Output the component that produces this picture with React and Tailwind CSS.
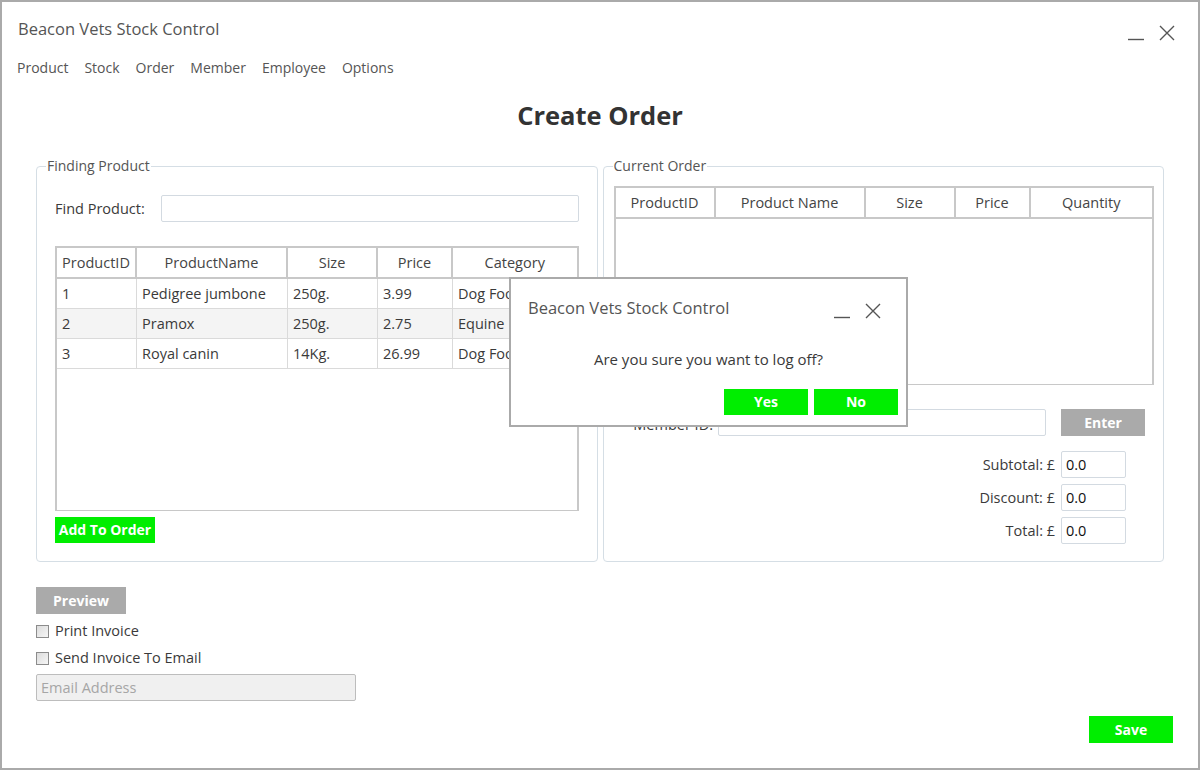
import React from "react";

const FONT = { fontFamily: '"Open Sans", "Noto Sans", sans-serif' };

const leftCols = ["ProductID", "ProductName", "Size", "Price", "Category"];
const rightCols = ["ProductID", "Product Name", "Size", "Price", "Quantity"];

const products = [
  { id: "1", name: "Pedigree jumbone", size: "250g.", price: "3.99", category: "Dog Food" },
  { id: "2", name: "Pramox", size: "250g.", price: "2.75", category: "Equine Health" },
  { id: "3", name: "Royal canin", size: "14Kg.", price: "26.99", category: "Dog Food" },
];

// window min / close glyphs
const WinControls = ({ className = "" }) => (
  <div className={`flex items-start gap-[15px] ${className}`}>
    <svg width="16" height="16" viewBox="0 0 16 16">
      <line x1="0" y1="14.5" x2="16" y2="14.5" stroke="#555" strokeWidth="1.4" />
    </svg>
    <svg width="16" height="16" viewBox="0 0 16 16">
      <path d="M1 1 L15 15 M15 1 L1 15" stroke="#555" strokeWidth="1.4" fill="none" />
    </svg>
  </div>
);

const GreenButton = ({ children, className = "" }) => (
  <button className={`h-[26px] bg-[#00ee00] text-white font-bold text-[14px] leading-none ${className}`}>
    {children}
  </button>
);

const GrayButton = ({ children, className = "" }) => (
  <button className={`h-[27px] bg-[#aaaaaa] text-white font-bold text-[14px] leading-none ${className}`}>
    {children}
  </button>
);

const TextBox = ({ className = "", value }) => (
  <div className={`h-[27px] border border-[#d3dae1] rounded-[2px] bg-white flex items-center px-[4px] text-[14.5px] text-[#111] ${className}`}>
    {value}
  </div>
);

const ProductTable = ({ cols, grid, rows, height }) => (
  <div className={`border-x-2 border-t-2 border-b border-[#c8c8c8] bg-white ${height}`}>
    <div className={`grid ${grid} border-b-2 border-[#c8c8c8] h-[31px]`}>
      {cols.map((c, i) => (
        <div
          key={c}
          className={`flex items-center justify-center text-[14.5px] text-[#444] ${i < cols.length - 1 ? "border-r-2 border-[#c8c8c8]" : ""}`}
        >
          {c}
        </div>
      ))}
    </div>
    {rows.map((r, ri) => (
      <div
        key={r.id}
        className={`grid ${grid} h-[30px] border-b border-[#dadada] ${ri === 1 ? "bg-[#f4f4f4]" : ""}`}
      >
        {[r.id, r.name, r.size, r.price, r.category].map((v, i) => (
          <div
            key={i}
            className={`flex items-center px-[5px] text-[14.5px] text-[#3a3a3a] whitespace-nowrap overflow-hidden ${i < 4 ? "border-r border-[#dadada]" : ""}`}
          >
            {v}
          </div>
        ))}
      </div>
    ))}
  </div>
);

const Checkbox = ({ label }) => (
  <label className="flex items-center gap-[6px] h-[20px] text-[14.5px] text-[#3a3a3a]">
    <span className="w-[13px] h-[13px] border border-[#8c8c8c] bg-gradient-to-br from-[#dcdcdc] to-[#f6f6f6]" />
    {label}
  </label>
);

export default function App() {
  return (
    <div style={FONT} className="w-[1200px] h-[770px] border-2 border-[#aaaaaa] bg-white relative overflow-hidden">
      {/* title bar */}
      <div className="flex justify-between pl-[16px] pr-[23px] pt-[15px]">
        <div className="text-[16.5px] leading-[24px] text-[#555]">Beacon Vets Stock Control</div>
        <WinControls className="mt-[8px]" />
      </div>

      {/* menu */}
      <nav className="flex gap-[16px] pl-[15px] mt-[17px] text-[14px] leading-[20px] text-[#555]">
        {["Product", "Stock", "Order", "Member", "Employee", "Options"].map((m) => (
          <span key={m}>{m}</span>
        ))}
      </nav>

      <h1 className="text-center text-[25.5px] leading-[34px] font-bold text-[#333] mt-[20px]">Create Order</h1>

      {/* two group boxes */}
      <div className="flex gap-[5px] px-[34px] mt-[24px] items-stretch">
        <fieldset className="w-[562px] border border-[#d5dee5] rounded-[4px] px-[18px] pb-[18px] m-0 min-w-0">
          <legend className="ml-[-9px] px-[1px] text-[14px] leading-[20px] text-[#555]">Finding Product</legend>
          <div className="flex items-center mt-[19px]">
            <span className="w-[106px] text-[14.5px] text-[#3a3a3a]">Find Product:</span>
            <TextBox className="flex-1 h-[26px]" />
          </div>
          <div className="mt-[24px]">
            <ProductTable
              cols={leftCols}
              grid="grid-cols-[80px_151px_90px_75px_1fr]"
              rows={products}
              height="h-[265px]"
            />
          </div>
          <GreenButton className="w-[100px] mt-[6px]">Add To Order</GreenButton>
        </fieldset>

        <fieldset className="w-[562px] border border-[#d5dee5] rounded-[4px] pl-[10px] pr-[9px] pb-[12px] m-0 min-w-0">
          <legend className="ml-[-1px] px-[1px] text-[14px] leading-[20px] text-[#555]">Current Order</legend>
          <div className="mt-[10px]">
            <ProductTable
              cols={rightCols}
              grid="grid-cols-[100px_150px_90px_75px_1fr]"
              rows={[]}
              height="h-[199px]"
            />
          </div>
          <div className="flex items-center justify-end pr-[9px] mt-[24px]">
            <span className="text-[14.5px] text-[#3a3a3a] mr-[5px] mt-[5px]">Member ID:</span>
            <TextBox className="w-[328px]" />
            <GrayButton className="w-[84px] ml-[15px]">Enter</GrayButton>
          </div>
          <div className="flex flex-col items-end gap-[6px] pr-[28px] mt-[15px]">
            {["Subtotal: £", "Discount: £", "Total: £"].map((l) => (
              <div key={l} className="flex items-center">
                <span className="text-[14.5px] text-[#3a3a3a] mr-[6px]">{l}</span>
                <TextBox className="w-[65px]" value="0.0" />
              </div>
            ))}
          </div>
        </fieldset>
      </div>

      {/* bottom area */}
      <div className="flex flex-col items-start px-[34px] mt-[25px]">
        <GrayButton className="w-[90px]">Preview</GrayButton>
        <div className="mt-[7px]">
          <Checkbox label="Print Invoice" />
        </div>
        <div className="mt-[7px]">
          <Checkbox label="Send Invoice To Email" />
        </div>
        <div className="mt-[6px] w-[320px] h-[27px] border border-[#bdbdbd] rounded-[2px] bg-[#f0f0f0] flex items-center px-[4px] text-[14.5px] text-[#a6a6a6]">
          Email Address
        </div>
      </div>
      <div className="flex justify-end pr-[25px] mt-[15px]">
        <GreenButton className="w-[84px] h-[27px]">Save</GreenButton>
      </div>

      {/* log off dialog */}
      <div className="absolute left-[507px] top-[275px] w-[399px] h-[150px] border-2 border-[#aaaaaa] bg-white">
        <div className="flex justify-between pl-[17px] pr-[25px] pt-[17px]">
          <div className="text-[16.5px] leading-[24px] text-[#555]">Beacon Vets Stock Control</div>
          <WinControls className="mt-[7px]" />
        </div>
        <div className="text-center text-[15px] leading-[20px] text-[#3a3a3a] mt-[29px]">
          Are you sure you want to log off?
        </div>
        <div className="flex justify-end gap-[6px] pr-[8px] mt-[20px]">
          <GreenButton className="w-[84px]">Yes</GreenButton>
          <GreenButton className="w-[84px]">No</GreenButton>
        </div>
      </div>
    </div>
  );
}
